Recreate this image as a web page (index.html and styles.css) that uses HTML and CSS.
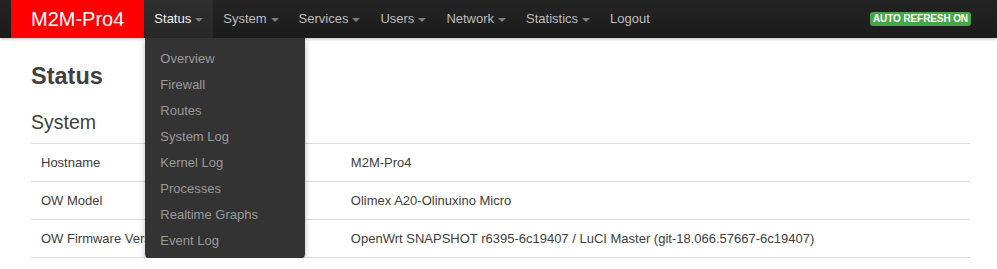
FILE: index.html
```html
<!DOCTYPE html>
<html>
<head>
<meta charset="utf-8">
<title>M2M-Pro4 - Status</title>
<link rel="stylesheet" href="styles.css">
</head>
<body>
<header class="navbar">
  <a class="brand" href="#">M2M-Pro4</a>
  <ul class="nav">
    <li class="nav-item active">
      <a href="#">Status<span class="caret"></span></a>
      <ul class="dropdown-menu">
        <li><a href="#">Overview</a></li>
        <li><a href="#">Firewall</a></li>
        <li><a href="#">Routes</a></li>
        <li><a href="#">System Log</a></li>
        <li><a href="#">Kernel Log</a></li>
        <li><a href="#">Processes</a></li>
        <li><a href="#">Realtime Graphs</a></li>
        <li><a href="#">Event Log</a></li>
      </ul>
    </li>
    <li class="nav-item"><a href="#">System<span class="caret"></span></a></li>
    <li class="nav-item"><a href="#">Services<span class="caret"></span></a></li>
    <li class="nav-item"><a href="#">Users<span class="caret"></span></a></li>
    <li class="nav-item"><a href="#">Network<span class="caret"></span></a></li>
    <li class="nav-item"><a href="#">Statistics<span class="caret"></span></a></li>
    <li class="nav-item"><a href="#">Logout</a></li>
  </ul>
  <div class="nav-right"><span class="label">AUTO REFRESH ON</span></div>
</header>
<main class="container">
  <h2 class="page-title">Status</h2>
  <h3 class="section-title">System</h3>
  <div class="info-table">
    <div class="row"><div class="key">Hostname</div><div class="val">M2M-Pro4</div></div>
    <div class="row"><div class="key">OW Model</div><div class="val">Olimex A20-Olinuxino Micro</div></div>
    <div class="row"><div class="key">OW Firmware Version</div><div class="val">OpenWrt SNAPSHOT r6395-6c19407 / LuCI Master (git-18.066.57667-6c19407)</div></div>
  </div>
</main>
</body>
</html>
```

FILE: styles.css
```css
* { box-sizing: border-box; }
html, body {
  margin: 0;
  padding: 0;
  background: #fff;
  font-family: "Liberation Sans", Arial, sans-serif;
  font-size: 13px;
  color: #404040;
  overflow: hidden;
}
a { text-decoration: none; }

.navbar {
  position: relative;
  z-index: 10;
  height: 38px;
  display: flex;
  align-items: stretch;
  padding-left: 11px;
  background: linear-gradient(#242424, #1b1b1b);
  box-shadow: 0 1px 3px rgba(0,0,0,0.25);
}
.brand {
  display: flex;
  align-items: center;
  padding: 0 20px 0 20px;
  background: #ff0000;
  color: #fff;
  font-size: 20px;
  line-height: 38px;
}
.nav {
  display: flex;
  list-style: none;
  margin: 0;
  padding: 0;
}
.nav-item {
  position: relative;
  display: flex;
}
.nav-item > a {
  display: flex;
  align-items: center;
  padding: 0 10px;
  color: #bdbdbd;
  font-size: 13px;
  line-height: 38px;
}
.nav-item.active > a {
  background: linear-gradient(#2e2e2e, #282828);
  color: #f2f2f2;
}
.caret {
  display: inline-block;
  width: 0;
  height: 0;
  margin-left: 4px;
  margin-top: 1px;
  border-top: 4px solid #7d7d7d;
  border-left: 4px solid transparent;
  border-right: 4px solid transparent;
}
.dropdown-menu {
  position: absolute;
  top: 100%;
  left: 1px;
  width: 160px;
  margin: 0;
  padding: 8px 0 5px;
  list-style: none;
  background: #333;
  border-radius: 0 0 5px 5px;
  box-shadow: 0 3px 6px rgba(0,0,0,0.25);
}
.dropdown-menu a {
  display: block;
  padding: 0 15px;
  line-height: 26px;
  font-size: 13px;
  color: #9a9a9a;
}
.nav-right {
  margin-left: auto;
  padding-right: 26px;
  display: flex;
  align-items: flex-start;
  padding-top: 12px;
}
.label {
  display: inline-block;
  background: #46a546;
  color: #fff;
  font-weight: bold;
  font-size: 10px;
  line-height: 14px;
  padding: 0 3px 0 3px;
  border-radius: 3px;
  letter-spacing: -0.1px;
}

.container {
  padding: 0 27px 0 31px;
}
.page-title {
  margin: 0;
  padding-top: 24px;
  font-size: 23.5px;
  line-height: 28px;
  font-weight: bold;
  color: #404040;
}
.section-title {
  margin: 0;
  padding-top: 20px;
  font-size: 19.5px;
  line-height: 24px;
  font-weight: normal;
  color: #404040;
}
.info-table {
  margin-top: 9px;
  border-bottom: 1px solid #ddd;
}
.info-table .row {
  display: grid;
  grid-template-columns: 33% 1fr;
  height: 38px;
  border-top: 1px solid #ddd;
  align-items: center;
}
.info-table .key,
.info-table .val {
  padding: 0 10px;
  line-height: 17px;
  font-size: 13px;
  color: #404040;
  white-space: nowrap;
}
```
